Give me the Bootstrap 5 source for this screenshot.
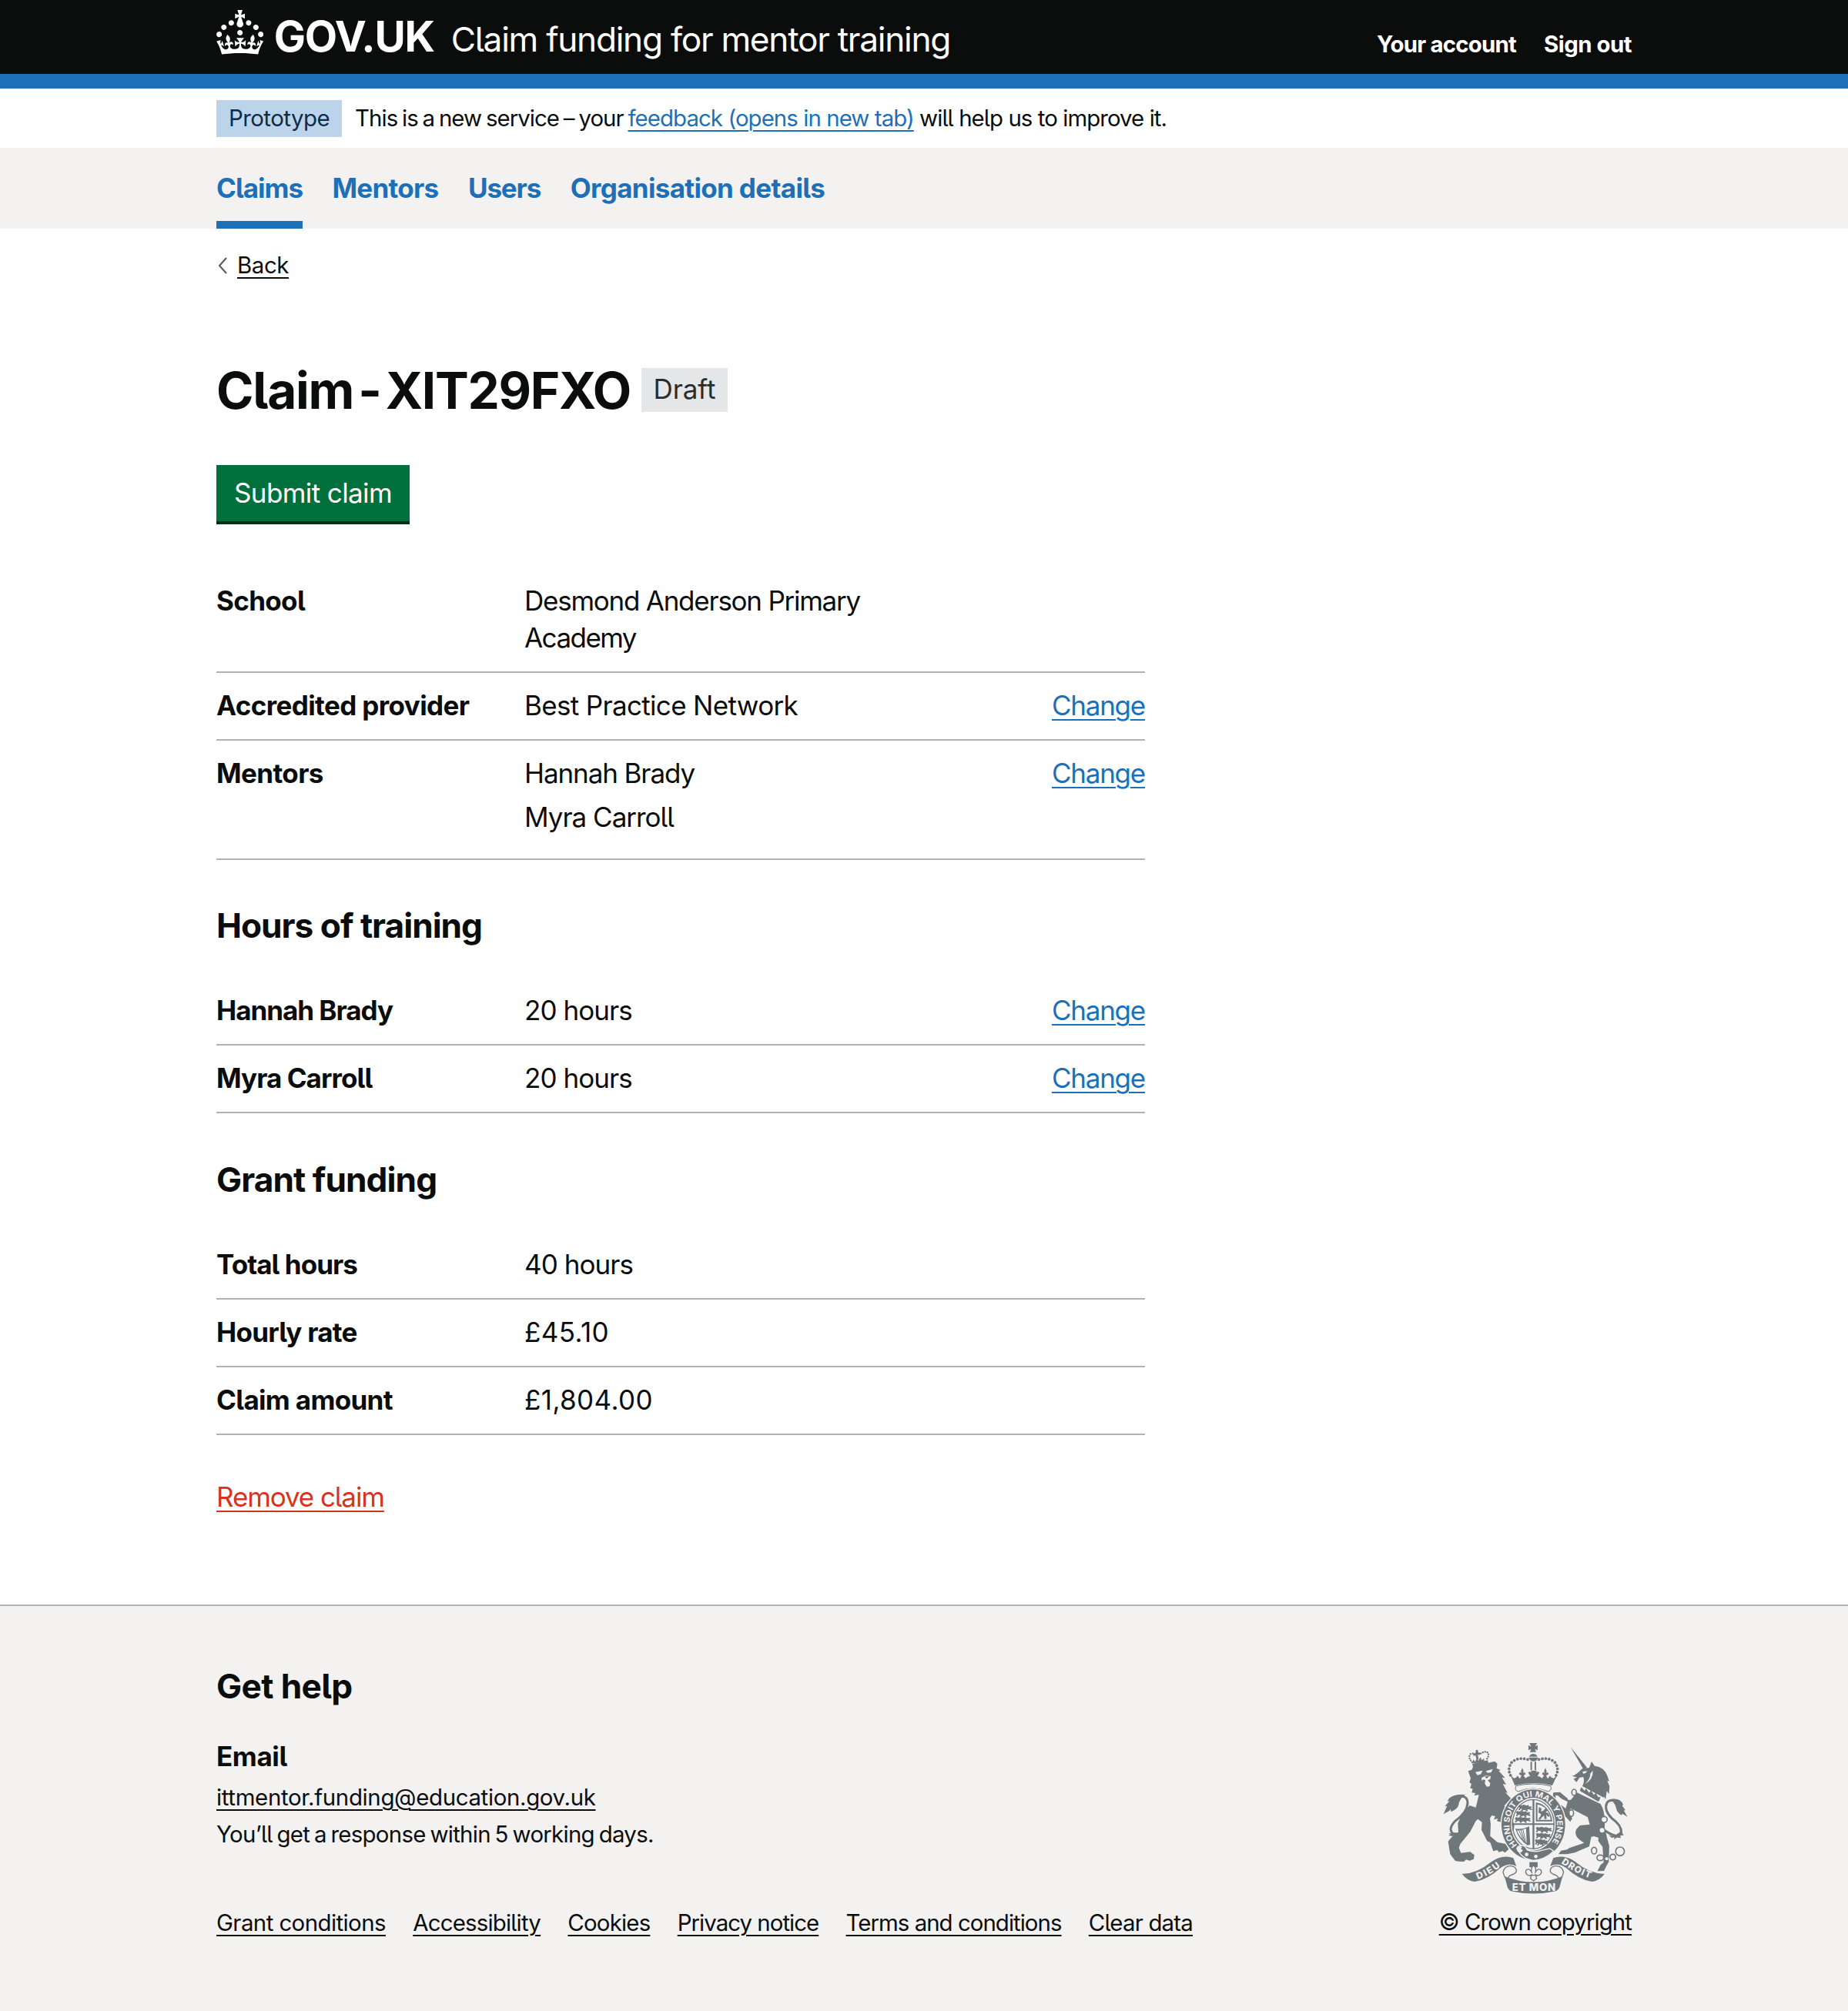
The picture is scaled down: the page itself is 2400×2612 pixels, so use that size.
<!DOCTYPE html>
<html lang="en">
<head>
<meta charset="utf-8">
<meta name="viewport" content="width=device-width, initial-scale=1">
<title>Claim - XIT29FXO - Claim funding for mentor training</title>
<link href="https://cdn.jsdelivr.net/npm/bootstrap@5.3.0/dist/css/bootstrap.min.css" rel="stylesheet">
<style>
:root{--ink:#0b0c0c;--blue:#1d70b8;--pale:#f3f2f1;--rule:#b1b4b6}
body{font-family:Inter,"Liberation Sans",sans-serif;font-feature-settings:"cv05","calt" 0;color:var(--ink);font-size:35px;line-height:47.87px;background:#fff}
.wrapper{width:1838px;margin:0 auto}
a{color:var(--blue);text-decoration:underline;text-decoration-thickness:2px;text-underline-offset:5px}
.t16{font-size:29.4px;line-height:38px}
.t24{font-size:44.2px;line-height:58px;font-weight:700}
/* tracking steps, in thousandths of an em */
.k0{letter-spacing:-.0017em}.k11{letter-spacing:-.0111em}.k14{letter-spacing:-.0138em}.k17{letter-spacing:-.0173em}.k19{letter-spacing:-.019em}.k21{letter-spacing:-.021em}.k23{letter-spacing:-.0227em}.k27{letter-spacing:-.0271em}.k29{letter-spacing:-.0289em}.k31{letter-spacing:-.0314em}.k33{letter-spacing:-.0326em}.k36{letter-spacing:-.0356em}.k44{letter-spacing:-.0441em}.kp{letter-spacing:.011em}
.top-bar{background:var(--ink);height:96px}
.accent{background:var(--blue);height:19px}
.crown{width:61.3px;height:57.5px;margin-top:13px}
.brand{font-size:55px;font-weight:700;line-height:60px;margin:17px 0 0 13.5px}
.product{font-size:44.2px;line-height:60px;margin:21px 0 0 22px;color:#fff}
.account{margin-top:38.5px;gap:36px}
.account a{color:#fff;font-weight:700;text-decoration:none}
.phase{height:77px}
.phase-intro{letter-spacing:-.032em;word-spacing:-.052em}
.tag-proto{background:#bbd4ea;color:#0c2d4a;width:163px;height:48px;line-height:47px;margin-right:17px}
.nav-band{background:var(--pale);height:105px}
.nav-band .nav{gap:38.5px}
.nav-band .nav-link{padding:0;color:var(--blue);font-weight:700;text-decoration:none;height:105px;line-height:104px;border-radius:0}
.nav-band .nav-link.active{box-shadow:inset 0 -10px 0 var(--blue)}
.back{padding-top:29px}
.back svg{width:12px;height:22px;margin:0 13px 0 2px}
.back a{color:var(--ink)}
.page-title{font-size:65.6px;line-height:96px;font-weight:700;margin:95px 0 0}
.title-text{letter-spacing:-.0195em;word-spacing:-.125em}
.tag-draft{background:#e4e6e8;color:#282d30;font-weight:400;width:112px;height:57px;line-height:55px;font-size:35px;margin:-1px 0 0 14px}
.btn-submit{background:#00703c;color:#fff;border:0;border-radius:0;box-shadow:inset 0 -4px 0 #002d18;width:251px;height:77px;line-height:72px;padding:0 0 4px;font-size:35px;margin-top:48.5px}
.btn-submit:hover{background:#005a30;color:#fff}
.summary{width:1206px;margin:0}
.summary.first{margin-top:76.2px}
.summary .line{border-bottom:2px solid var(--rule);padding:19.15px 0}
.summary .line:first-child{padding-top:0}
.summary dt{width:400px;font-weight:700}
.summary dd{width:480px;margin:0}
.summary li{margin-bottom:9.5px}
.gap-title{margin:56.2px 0 58.3px}
.remove-row{margin:57px 0 115px}
.remove{color:#d4351c}
.foot{background:var(--pale);border-top:2px solid var(--rule);min-height:529px}
.foot a{color:var(--ink)}
.help-title{margin:75px 0 0}
.help-sub{font-size:35px;line-height:48px;font-weight:700;margin:38px 0 0}
.help-text{line-height:48px;margin:6px 0 0}
.help-reply{letter-spacing:-.0242em;word-spacing:-.06em}
.foot-links{gap:35.3px;margin-top:72px}
.arms-col{padding-top:177px}
.arms{width:240.6px;height:197.3px;margin-bottom:17.5px}
</style>
</head>
<body>
<header>
  <div class="top-bar">
    <div class="wrapper d-flex">
      <svg class="crown" viewBox="0 0 32 30" fill="#fff" aria-hidden="true"><path d="M22.6 10.4c-1 .4-2-.1-2.4-1-.4-.9.1-2 1-2.4.9-.4 2 .1 2.4 1s-.1 2-1 2.4m-5.9 6.7c-.9.4-2-.1-2.4-1-.4-.9.1-2 1-2.4.9-.4 2 .1 2.4 1s-.1 2-1 2.4m10.8-3.7c-1 .4-2-.1-2.4-1-.4-.9.1-2 1-2.4.9-.4 2 .1 2.4 1s0 2-1 2.4m3.3 4.8c-1 .4-2-.1-2.4-1-.4-.9.1-2 1-2.4.9-.4 2 .1 2.4 1s-.1 2-1 2.4M17 4.7l2.3 1.2V2.5l-2.3.7-.2-.2.9-3h-3.4l.9 3-.2.2c-.1.1-2.3-.7-2.3-.7v3.4L15 4.7c.1.1.1.2.2.2l-1.3 4c-.1.2-.1.4-.1.6 0 1.1.8 2 1.9 2.2h.7c1-.2 1.9-1.1 1.9-2.1 0-.2 0-.4-.1-.6l-1.3-4c-.1-.2 0-.2.1-.3m-7.6 5.7c.9.4 2-.1 2.4-1 .4-.9-.1-2-1-2.4-.9-.4-2 .1-2.4 1s0 2 1 2.4m-5 3c.9.4 2-.1 2.4-1 .4-.9-.1-2-1-2.4-.9-.4-2 .1-2.4 1s.1 2 1 2.4m-3.2 4.8c.9.4 2-.1 2.4-1 .4-.9-.1-2-1-2.4-.9-.4-2 .1-2.4 1s0 2 1 2.4m14.8 11c4.4 0 8.6.3 12.3.8 1.1-4.5 2.4-7 3.7-8.8l-2.5-.9c.2 1.3.3 1.9 0 2.7-.4-.4-.8-1.1-1.1-2.3l-1.2 4c.7-.5 1.3-.8 2-.9-1.1 2.5-2.6 3.1-3.5 3-1.1-.2-1.7-1.2-1.5-2.1.3-1.2 1.5-1.5 2.1-.1 1.1-2.3-.8-3-2-2.3 1.9-1.9 2.1-3.5.6-5.6-2.1 1.6-2.1 3.2-1.2 5.5-1.2-1.4-3.2-.6-2.5 1.6.9-1.4 2.1-.5 1.9.8-.2 1.1-1.7 2.1-3.5 1.9-2.7-.2-2.9-2.1-2.9-3.6.7-.1 1.9.5 2.9 1.9l.4-4.3c-1.1 1.1-2.1 1.4-3.2 1.4.4-1.2 2.1-3 2.1-3h-5.4s1.7 1.9 2.1 3c-1.1 0-2.1-.2-3.2-1.4l.4 4.3c1-1.4 2.2-2 2.9-1.9-.1 1.5-.2 3.4-2.9 3.6-1.9.2-3.4-.8-3.5-1.9-.2-1.3 1-2.2 1.9-.8.7-2.3-1.2-3-2.5-1.6.9-2.2.9-3.9-1.2-5.5-1.5 2-1.3 3.7.6 5.6-1.2-.7-3.1 0-2 2.3.6-1.4 1.8-1.1 2.1.1.2.9-.3 1.9-1.5 2.1-.9.2-2.4-.5-3.5-3 .6 0 1.2.3 2 .9l-1.2-4c-.3 1.1-.7 1.9-1.1 2.3-.3-.8-.2-1.4 0-2.7l-2.9.9C1.3 23 2.6 25.5 3.7 30c3.7-.5 7.9-.8 12.3-.8"/></svg>
      <span class="brand text-white k23">GOV.UK</span>
      <span class="product k29">Claim funding for mentor training</span>
      <div class="account t16 d-flex ms-auto"><a href="#" class="k27">Your account</a><a href="#" class="k17">Sign out</a></div>
    </div>
  </div>
  <div class="accent"></div>
  <div class="phase wrapper d-flex align-items-center t16">
    <span class="tag-proto text-center k17">Prototype</span>
    <span class="text-nowrap"><span class="phase-intro">This is a new service – your </span><a href="#" class="k31">feedback (opens in new tab)</a><span class="k31"> will help us to improve it.</span></span>
  </div>
  <div class="nav-band">
    <nav class="wrapper nav">
      <a class="nav-link active k29" href="#">Claims</a><a class="nav-link k21" href="#">Mentors</a><a class="nav-link k33" href="#">Users</a><a class="nav-link k19" href="#">Organisation details</a>
    </nav>
  </div>
</header>
<main class="wrapper">
  <div class="back t16 d-flex align-items-center"><svg viewBox="0 0 12 22" fill="none" stroke="#505a5f" stroke-width="2"><path d="M11 1L2 11L11 21"/></svg><a href="#" class="k14">Back</a></div>
  <h1 class="page-title d-flex align-items-center"><span class="title-text">Claim - XIT29FXO</span><span class="tag-draft text-center k0">Draft</span></h1>
  <button class="btn btn-submit d-block k17" type="button">Submit claim</button>
  <dl class="summary first">
    <div class="line d-flex"><dt class="k19">School</dt><dd><span class="k36">Desmond Anderson Primary</span><br><span class="k44">Academy</span></dd></div>
    <div class="line d-flex"><dt class="k17">Accredited provider</dt><dd class="k19">Best Practice Network</dd><dd class="w-auto ms-auto k36"><a href="#">Change</a></dd></div>
    <div class="line d-flex"><dt class="k17">Mentors</dt><dd><ul class="list-unstyled mb-0"><li class="k31">Hannah Brady</li><li class="k29">Myra Carroll</li></ul></dd><dd class="w-auto ms-auto k36"><a href="#">Change</a></dd></div>
  </dl>
  <h2 class="t24 gap-title k23">Hours of training</h2>
  <dl class="summary">
    <div class="line d-flex"><dt class="k29">Hannah Brady</dt><dd class="k27">20 hours</dd><dd class="w-auto ms-auto k36"><a href="#">Change</a></dd></div>
    <div class="line d-flex"><dt class="k27">Myra Carroll</dt><dd class="k27">20 hours</dd><dd class="w-auto ms-auto k36"><a href="#">Change</a></dd></div>
  </dl>
  <h2 class="t24 gap-title k21">Grant funding</h2>
  <dl class="summary">
    <div class="line d-flex"><dt class="k27">Total hours</dt><dd class="k27">40 hours</dd></div>
    <div class="line d-flex"><dt class="k21">Hourly rate</dt><dd class="kp">£45.10</dd></div>
    <div class="line d-flex"><dt class="k19">Claim amount</dt><dd class="kp">£1,804.00</dd></div>
  </dl>
  <div class="remove-row"><a class="remove k31" href="#">Remove claim</a></div>
</main>
<footer class="foot">
  <div class="wrapper d-flex">
    <div>
      <h2 class="t24 help-title k14">Get help</h2>
      <h3 class="help-sub k11">Email</h3>
      <p class="t16 help-text"><a href="#" class="k11">ittmentor.funding@education.gov.uk</a><br><span class="help-reply">You’ll get a response within 5 working days.</span></p>
      <div class="foot-links t16 d-flex"><a href="#" class="k19">Grant conditions</a><a href="#" class="k27">Accessibility</a><a href="#" class="k27">Cookies</a><a href="#" class="k33">Privacy notice</a><a href="#" class="k33">Terms and conditions</a><a href="#" class="k27">Clear data</a></div>
    </div>
    <div class="ms-auto t16 text-center arms-col">
      <svg class="arms d-block mx-auto" viewBox="100 66 722 592" aria-label="Royal coat of arms">
        <defs>
          <path id="garter" d="M389 467A93 109 0 1 1 515 467"/>
          <path id="rib-l" d="M236 601Q292 580 336 541"/>
          <path id="rib-r" d="M560 536Q612 576 690 602"/>
          <g id="beast"><path d="M0 6l6-5 6 3 9-3 12 4 5-3 4 6-5 3 8 5-6 2-7-3-8 1 4 6-6 1-5-6-8 0-4 6-5-2 4-7z"/></g>
        </defs>
        <g fill="#6f777b" stroke="none">
          <!-- lion -->
          <path d="M198 178l14-5 6-13 84-20 10 9-3 18 16 8-8 2 25 28-12-2 16 28-13-3 19 36-10-4 23 25-26 28 30 50 9 26-3 24-10-14-6 14-12-9-4 10-9-27-10 4 3-14-17-4 4-10-16 4 6-13-14-3-7 12 3 22-2 46 28 24 36 8 8 20-14 13-10-6-14 4-6-8-16 4-12-34-12-5-22-44 2-30-16-12-8 8-22 42-38 46-6 16 8 20 36-4 16 12-2 16-16 6-14-4-8 8-20-1-14-2-20-26-8-50 12-14 28-22-2-34 16-36 30-34L228 320 240 270 222 274l4-10-14-2 4-14-10-4 5-16-8-6 5-16z"/>
          <path d="M226 182l28-6-6 14-14 4zM268 178l26-8-6 13-15 2z" fill="#f3f2f1"/>
          <path d="M250 205l16-9 20 2-2 12-10 3 10 12-2 12-11 2-8-12 2-14-9-2-4 6z" fill="#f3f2f1"/>
          <path d="M262 199l18-1-9 10z"/>
          <path d="M214 150l60-14 4 14-60 14z"/>
          <g fill="none" stroke="#6f777b" stroke-width="7" stroke-linecap="round" stroke-dasharray=".1 9"><path d="M214 144Q196 124 207 112 220 104 230 120M272 130Q284 112 270 103 256 102 244 112"/></g>
          <path d="M228 97l8-2 1 10 9 2-2 8-8 0 3 18-8 2-4-18-8 2-2-8 10-3zM214 148l4-16 7 10 7-14 6 10 8-14 5 12 9-8 1 16z"/>
          <path d="M212 372Q172 430 140 423 118 405 146 374 194 340 196 303 196 275 168 277" fill="none" stroke="#6f777b" stroke-width="9"/>
          <path d="M188 270Q146 266 124 284l-7 12 9-2-19 22 9-2-14 32 22-12 6-7 1 10q26-10 30-28 2-20 27-41zM116 416q8 8 28 2l20 4-10 14-22 2 6-6-17-3 8-4z"/>
          <!-- unicorn -->
          <path d="M597 84l64 80-12 10z"/>
          <path d="M610 196q20-12 32-27l28-4 9-24 12 17q38 4 50 40l7 20-8-3 9 22-2 30-9-11-4 32-7-11-2 13-9-14-73-39q10-18 4-36l-14 2-13 18-11-12 14-8-12-1-8-5z"/>
          <path d="M644 180l18-2-6 8-10 2zM684 176q2 34-30 52 22-22 20-40z" fill="#f3f2f1"/>
          <path d="M626 252l7-16 95 46-8 18z" fill="#f3f2f1"/>
          <path d="M633 255l6-14 13 14 5-9 13 17 6-10 12 18 7-8 10 17 9-2-4 13-5 6z"/>
          <path d="M622 262l92 44q20 30 16 92l10 42 8 30-2 62-10 18-8 17-26 1 12-24 12-10-4-60-30-42-14 2-8 38-56 24-30 6h-34l10-14 24-4 8-6 58-20q-44-24-30-54l14-14 38-4-8-28-46-24-20-10-10 14 16 24-8 14-12-14-32-32-14-8-2-16 24 4 18 14 8-26-24-12-14-12-10-2 2 12-12-8 2-14 26-2 26 22 16 8z"/>
          <path d="M724 405Q784 448 794 418 798 390 758 362 726 330 739 302 746 290 768 292" fill="none" stroke="#6f777b" stroke-width="9"/>
          <path d="M752 288q38-8 50 20l-3 6 12 16-6 2 14 24-20-12-3 6q-16-8-20-24-4-22-24-38zM744 426q20 10 34-2l20-14 2 12 5 6-14 1 2 10-16-2-10 8 1-10-10 4z"/>
          <g fill="none" stroke="#6f777b" stroke-width="5"><ellipse cx="611" cy="261" rx="9" ry="12"/><ellipse cx="600" cy="342" rx="9" ry="13"/><circle cx="728" cy="367" r="12" fill="#f3f2f1"/><ellipse cx="689" cy="488" rx="10" ry="13"/><ellipse cx="713" cy="516" rx="13" ry="11"/><circle cx="762" cy="513" r="11"/><circle cx="790" cy="491" r="17"/></g>
          <g fill="#f3f2f1"><circle cx="720" cy="409" r="9"/><circle cx="698" cy="443" r="8"/><circle cx="592" cy="284" r="7"/><circle cx="738" cy="520" r="6"/></g>
          <!-- imperial crown -->
          <path d="M437 69h30l-8 13 10-5v20l-10-5 4 12h-24l4-12-10 5V77l11 6zM436 122a17 17 0 0 1 32 0zM434 125h37q-4 15-18 15t-19-15zM441 142h6v32h-6zM457 142h6v32h-6z"/>
          <g fill="none" stroke="#6f777b" stroke-width="11" stroke-linecap="round" stroke-dasharray=".1 13.2"><path d="M430 133Q390 122 366 146 348 175 368 202M474 133Q514 122 538 146 556 175 536 202"/></g>
          <path d="M362 192l14 14q12-2 14-10l10 12 6-12-10-6 4-8 6 4-2-8 5-12 5 12-2 8 6-4 4 8-8 6 8 10q10-10 18-8l-8-14 6-4 8 4-4-8h24l-4 8 8-4 6 4-8 14q8-2 18 8l8-10-8-6 4-8 6 4-2-8 5-12 5 12-2 8 6-4 4 8-10 6 6 12 10-12q2 8 14 10l14-14-20 42q-72-18-146 0z"/>
          <path d="M385 236q66-16 134 0 8 14-8 22-60-24-118 0-16-6-8-22z" fill="#f3f2f1" stroke="#6f777b" stroke-width="3"/>
          <!-- garter and shield -->
          <path fill-rule="evenodd" d="M452 248a126 139 0 1 0 .1 0zM452 284a85 101 0 1 1-.1 0z" stroke="#f3f2f1" stroke-width="4"/>
          <ellipse cx="452" cy="385" rx="81" ry="96" fill="none" stroke="#6f777b" stroke-width="4"/>
          <path d="M449 290h7v192h-7zM371 382h162v6H371z"/>
          <use href="#beast" x="394" y="308"/><use href="#beast" x="384" y="332"/><use href="#beast" x="380" y="356"/><use href="#beast" x="404" y="312"/><use href="#beast" x="398" y="335"/><use href="#beast" x="399" y="357"/>
          <use href="#beast" x="462" y="394"/><use href="#beast" x="462" y="418"/><use href="#beast" x="458" y="442"/><use href="#beast" x="482" y="396"/><use href="#beast" x="478" y="420"/><use href="#beast" x="466" y="446"/>
          <path d="M462 300v74h64q-2-30-24-54-16-16-40-20zM468 308q22 4 34 18 14 16 18 42h-52z" fill-rule="evenodd"/>
          <path d="M474 318l10 6-2 12 10-4 8-10 8 10-8 6 10 4 6 12-6 2-8-8 2 16-8 2-2-14-8 6-8 10-6-4 8-10 2-8-10-6z"/>
          <path d="M382 402q26 6 54-8l4 70-10 4q-36-24-48-66zm6 8q10 26 38 48l-2-56q-18 8-36 8z" fill-rule="evenodd"/>
          <path d="M396 410l16 34M404 408l14 44M412 407l10 48" stroke="#6f777b" stroke-width="3"/>
          <text font-family="Inter, sans-serif" font-weight="700" font-size="31" fill="#f3f2f1"><textPath href="#garter" textLength="478" lengthAdjust="spacingAndGlyphs">HONI SOIT QUI MAL Y PENSE</textPath></text>
          <path d="M388 478q10-14 28-8 8 4 12 16 28 10 54 2l34-8 16 10q-38 36-80 36-46-4-64-48z" stroke="#f3f2f1" stroke-width="4"/>
          <g fill="#f3f2f1"><circle cx="426" cy="503" r="7"/><circle cx="462" cy="511" r="7"/><path d="M386 480q12-12 22-6l-4 8 8 4-8 10q-14 2-18-16z"/></g>
          <!-- motto ribbon -->
          <path d="M174 579q60-2 112-46 46-32 88-16l12 32q-30-16-64 8-48 44-98 52-26 0-50-30z"/>
          <path d="M730 579q-60-2-112-46-46-32-88-16l-12 32q30-16 64 8 48 44 98 52 26 0 50-30z"/>
          <path d="M334 572q6-26 32-24 22 4 20 22-6 10-22 14-12 6-10 16l-14-10zM570 572q-6-26-32-24-22 4-20 22 6 10 22 14 12 6 10 16l14-10z" fill="#f3f2f1" stroke="#6f777b" stroke-width="4"/>
          <path d="M340 588q112 46 226 0l-10 36q-2 14-16 22-88 20-176 0-12-8-14-20z"/>
          <path d="M437 533h32v20h-32z"/>
          <path d="M453 545q14 14 6 30 8-20 22-12 8 14-8 22-8 2-12-2l4 14-12 9-12-9 4-14q-4 4-12 2-16-8-8-22 14-8 22 12-8-16 6-30zM438 584h30" fill="#f3f2f1" stroke="#6f777b" stroke-width="4"/>
          <g font-family="Inter, sans-serif" font-weight="800" fill="#f3f2f1" font-size="36"><text><textPath href="#rib-l" textLength="102" lengthAdjust="spacing">DIEU</textPath></text><text font-size="40" x="369" y="646" textLength="170">ET MON</text><text><textPath href="#rib-r" textLength="128" lengthAdjust="spacing">DROIT</textPath></text></g>
        </g>
      </svg>
      <a class="d-inline-block k31" href="#">© Crown copyright</a>
    </div>
  </div>
</footer>
<script src="https://cdn.jsdelivr.net/npm/bootstrap@5.3.0/dist/js/bootstrap.bundle.min.js"></script>
</body>
</html>
